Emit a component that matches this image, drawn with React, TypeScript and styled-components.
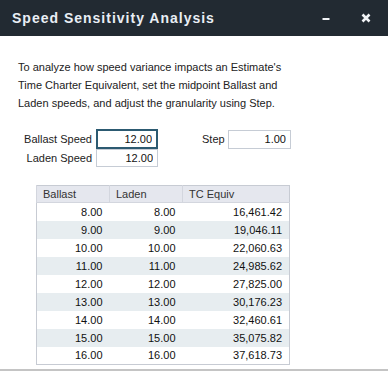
import React from 'react';
import styled, { createGlobalStyle } from 'styled-components';

const GlobalStyle = createGlobalStyle`
  html, body {
    margin: 0;
    padding: 0;
    background: #ffffff;
  }
  body {
    font-family: 'Liberation Sans', Arial, sans-serif;
    color: #222;
    overflow: hidden;
  }
`;

const Dialog = styled.div`
  width: 388px;
  height: 372px;
  display: flex;
  flex-direction: column;
  background: #ffffff;
  overflow: hidden;
`;

const TitleBar = styled.div`
  height: 36px;
  flex: none;
  display: flex;
  align-items: center;
  padding: 0 10px 0 12px;
  background: #222a32;
`;

const Title = styled.h1`
  flex: 1;
  margin: 0;
  font-size: 14px;
  font-weight: bold;
  letter-spacing: 1px;
  color: #e9eef5;
`;

const TitleButton = styled.button`
  width: 24px;
  height: 24px;
  padding: 0;
  margin-left: 16px;
  border: none;
  background: transparent;
  display: flex;
  align-items: center;
  justify-content: center;
  cursor: pointer;
`;

const Body = styled.div`
  flex: 1;
  padding: 22px 18px 0 18px;
`;

const Intro = styled.p`
  margin: 0;
  width: 290px;
  font-size: 11px;
  line-height: 18px;
  color: #222;
`;

const Form = styled.div`
  margin-top: 17px;
  display: grid;
  grid-template-columns: 74px 62px 36px 22px 63px;
  column-gap: 4px;
  align-items: center;
`;

const Label = styled.label<{ $left?: boolean }>`
  font-size: 11px;
  color: #222;
  text-align: ${p => (p.$left ? 'left' : 'right')};
  white-space: nowrap;
`;

const Field = styled.input<{ $focused?: boolean; $h?: number }>`
  box-sizing: border-box;
  width: 100%;
  height: ${p => p.$h ?? 18}px;
  padding: 0 4px;
  font-family: 'Liberation Sans', Arial, sans-serif;
  font-size: 11px;
  color: #111;
  text-align: right;
  background: #fff;
  border: ${p => (p.$focused ? '2px solid #2c5a71' : '1px solid #c6ccd5')};
  outline: none;
`;

const Spacer = styled.div``;

const Table = styled.table`
  margin: 18px 0 0 18px;
  width: 254px;
  border-collapse: collapse;
  border: 1px solid #c7cbd3;
  font-size: 11px;
  table-layout: fixed;
`;

const HeadCell = styled.th<{ $w: number }>`
  box-sizing: border-box;
  width: ${p => p.$w}px;
  height: 17px;
  padding: 0 6px;
  font-weight: normal;
  text-align: left;
  color: #333;
  background: #e5e7ee;
  border-left: 1px solid #d3d6de;
  border-bottom: 1px solid #d3d6de;
`;

const Row = styled.tr<{ $striped: boolean }>`
  background: ${p => (p.$striped ? '#e7edf0' : '#ffffff')};
`;

const Cell = styled.td`
  box-sizing: border-box;
  height: 18px;
  padding: 0 7px;
  text-align: right;
  color: #111;
`;

const Footer = styled.div`
  flex: none;
  height: 1px;
  border-top: 2px solid #c4c4c4;
`;

const rows = [
  [8, 16461.42],
  [9, 19046.11],
  [10, 22060.63],
  [11, 24985.62],
  [12, 27825.0],
  [13, 30176.23],
  [14, 32460.61],
  [15, 35075.82],
  [16, 37618.73],
];

const fmt = (n: number) =>
  n.toLocaleString('en-US', { minimumFractionDigits: 2, maximumFractionDigits: 2 });

export default function App() {
  return (
    <>
      <GlobalStyle />
      <Dialog>
        <TitleBar>
          <Title>Speed Sensitivity Analysis</Title>
          <TitleButton aria-label="Minimize">
            <svg width="10" height="10" viewBox="0 0 10 10">
              <rect x="1.5" y="5" width="7" height="2" fill="#f2f4f7" />
            </svg>
          </TitleButton>
          <TitleButton aria-label="Close">
            <svg width="10" height="10" viewBox="0 0 10 10">
              <path d="M1.5 1.5 L8.5 8.5 M8.5 1.5 L1.5 8.5" stroke="#f2f4f7" strokeWidth="2.6" />
            </svg>
          </TitleButton>
        </TitleBar>
        <Body>
          <Intro>
            To analyze how speed variance impacts an Estimate's Time Charter Equivalent, set the
            midpoint Ballast and Laden speeds, and adjust the granularity using Step.
          </Intro>
          <Form>
            <Label>Ballast Speed</Label>
            <Field $focused $h={20} defaultValue="12.00" />
            <Spacer />
            <Label $left>Step</Label>
            <Field $h={19} defaultValue="1.00" />
            <Label>Laden Speed</Label>
            <Field $h={18} defaultValue="12.00" />
          </Form>
          <Table>
            <thead>
              <tr>
                <HeadCell $w={73}>Ballast</HeadCell>
                <HeadCell $w={73}>Laden</HeadCell>
                <HeadCell $w={107}>TC Equiv</HeadCell>
              </tr>
            </thead>
            <tbody>
              {rows.map(([speed, tce], i) => (
                <Row key={speed} $striped={i % 2 === 1}>
                  <Cell>{fmt(speed)}</Cell>
                  <Cell>{fmt(speed)}</Cell>
                  <Cell>{fmt(tce)}</Cell>
                </Row>
              ))}
            </tbody>
          </Table>
        </Body>
        <Footer />
      </Dialog>
    </>
  );
}
